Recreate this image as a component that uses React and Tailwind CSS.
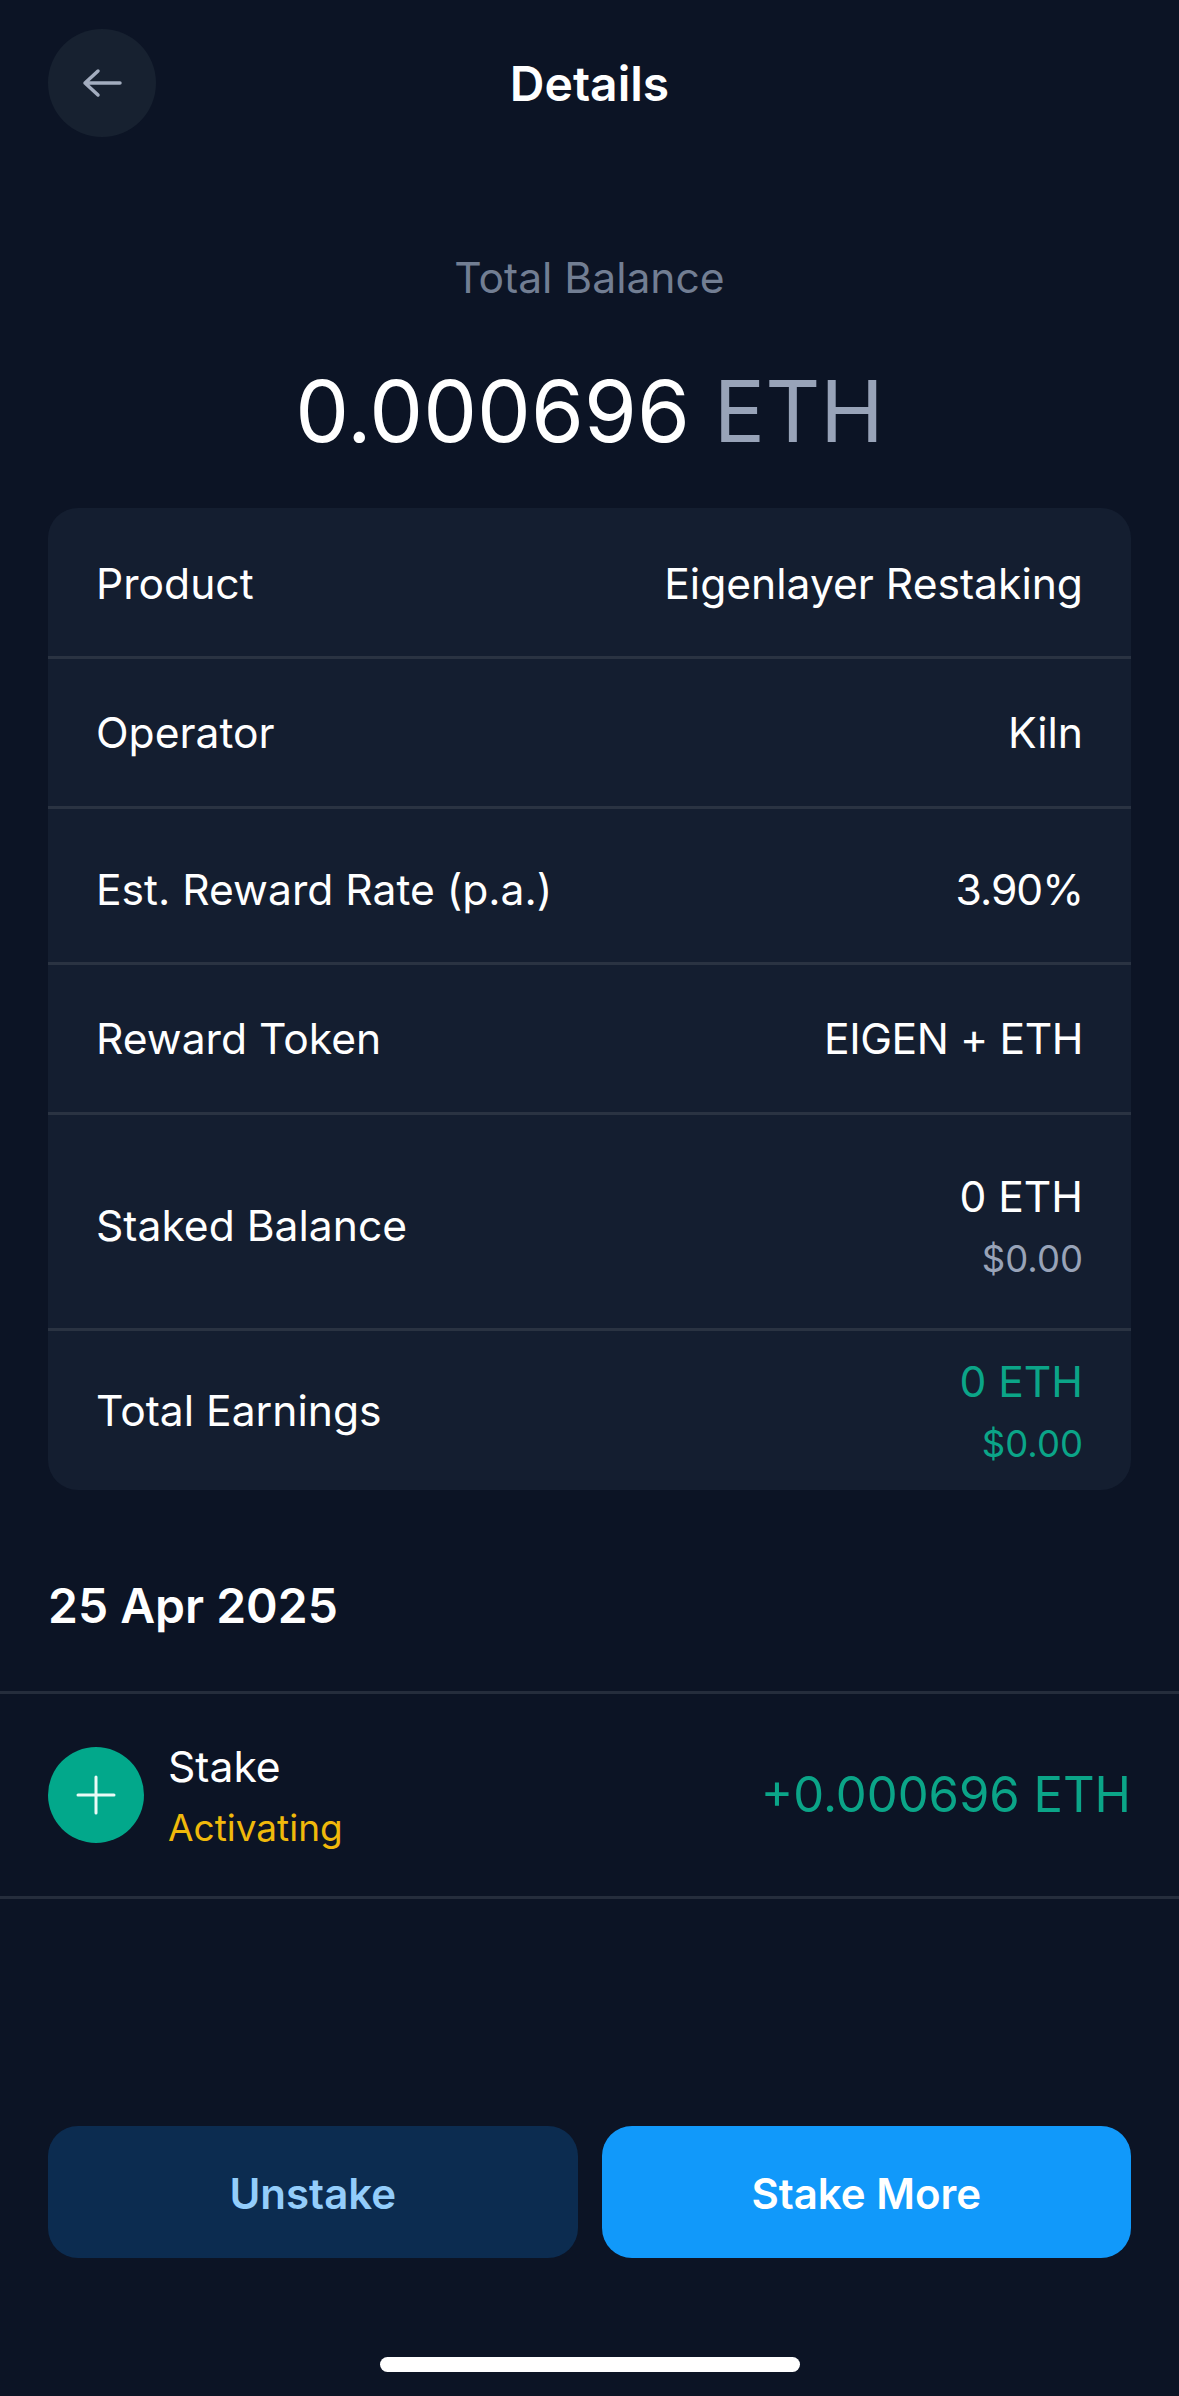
import React from "react";

function Row({ label, children, h }) {
  return (
    <div className={`flex items-center justify-between px-12 ${h}`}>
      <span className="text-[42.6px] leading-[52px] text-white">{label}</span>
      <div className="text-right">{children}</div>
    </div>
  );
}

const V = ({ children, track = "" }) => <div className={`text-[42.6px] leading-[52px] text-white ${track}`}>{children}</div>;

export default function App() {
  return (
    <div className="flex h-[2396px] w-[1179px] flex-col overflow-hidden bg-[#0c1425] font-['Inter',sans-serif]">
      <header className="flex items-center px-12 pt-[29px]">
        <button className="flex h-[108px] w-[108px] items-center justify-center rounded-full bg-[#172130]">
          <svg width="40" height="32" viewBox="0 0 40 32" fill="none" stroke="#a3adbf" strokeWidth="3.500" strokeLinecap="round" strokeLinejoin="round">
            <path d="M38 16H3M16 4L3 16L16 28" />
          </svg>
        </button>
        <h1 className="flex-1 pt-[2px] pr-[108px] text-center text-[48px] leading-[56px] font-semibold text-white">Details</h1>
      </header>

      <p className="mt-[115px] text-center text-[42.6px] leading-[52px] text-[#727e93]">Total Balance</p>
      <p className="mt-[55px] text-center text-[85.4px] leading-[104px] text-white">
        0.000696 <span className="text-[#98a3b8]">ETH</span>
      </p>

      <section className="mx-12 mt-[45px] divide-y-[3px] divide-[#2a3342] rounded-[30px] bg-[#141e30]">
        <Row label="Product" h="h-[151px] pt-[4px]"><V>Eigenlayer Restaking</V></Row>
        <Row label="Operator" h="h-[150px] pt-[1px]"><V>Kiln</V></Row>
        <Row label="Est. Reward Rate (p.a.)" h="h-[156px] pt-[8px]"><V track="tracking-[-1px]">3.90%</V></Row>
        <Row label="Reward Token" h="h-[150px]"><V track="tracking-[-0.4px]">EIGEN + ETH</V></Row>
        <Row label="Staked Balance" h="h-[216px] pt-[9px]">
          <V>0 ETH</V>
          <div className="mt-[14px] text-[36.500px] leading-[44px] text-[#98a3b8]">$0.00</div>
        </Row>
        <Row label="Total Earnings" h="h-[159px]">
          <div className="text-[42.6px] leading-[52px] text-[#0ba588]">0 ETH</div>
          <div className="mt-[14px] text-[36.500px] leading-[44px] text-[#0ba588]">$0.00</div>
        </Row>
      </section>

      <h2 className="mt-[87px] px-12 text-[48px] leading-[58px] font-semibold text-white">25 Apr 2025</h2>

      <div className="mt-[56px] flex h-[208px] items-center justify-between border-y-[3px] border-[#252d3c] px-12">
        <div className="flex items-center gap-[24px]">
          <div className="flex h-24 w-24 items-center justify-center rounded-full bg-[#02a88b]">
            <svg width="40" height="40" viewBox="0 0 40 40" fill="none" stroke="#eafaf6" strokeWidth="3" strokeLinecap="round">
              <path d="M20 2V38M2 20H38" />
            </svg>
          </div>
          <div>
            <div className="text-[42.6px] leading-[52px] text-white">Stake</div>
            <div className="mt-[13px] text-[37px] leading-[44px] text-[#f0b90b]">Activating</div>
          </div>
        </div>
        <span className="text-[49px] leading-[58px] text-[#0ba588]">+0.000696 ETH</span>
      </div>

      <div className="mt-auto flex gap-[24px] px-12">
        <button className="h-[132px] flex-1 rounded-[30px] bg-[#0c2c50] pt-[2px] text-[42px] font-semibold text-[#93cdfb]">Unstake</button>
        <button className="h-[132px] flex-1 rounded-[30px] bg-[#1199fa] pt-[2px] text-[42px] font-semibold text-white">Stake More</button>
      </div>
      <div className="mt-[99px] mb-[24px] h-[15px] w-[420px] self-center rounded-full bg-white" />
    </div>
  );
}
